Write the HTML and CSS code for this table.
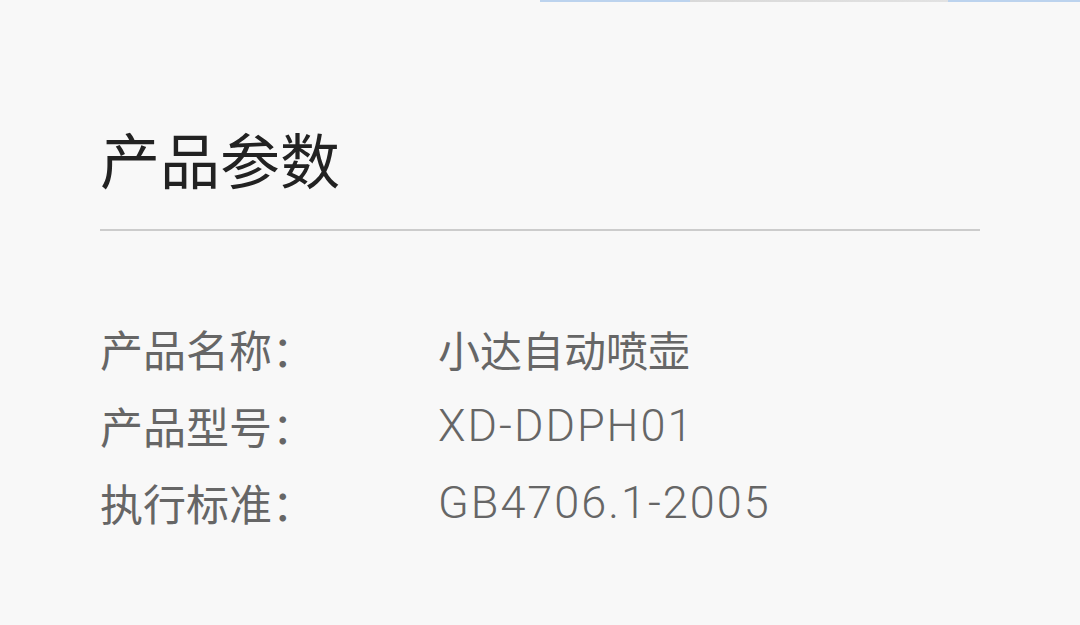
FILE: index.html
```html
<!DOCTYPE html>
<html lang="zh-CN">
<head>
    <meta charset="UTF-8">
    <meta name="viewport" content="width=device-width, initial-scale=1.0">
    <title>产品参数</title>
    <link rel="stylesheet" href="styles.css">
</head>
<body>
    <div class="top-strip"></div>
    <div class="container">
        <h2 class="title">产品参数</h2>
        <div class="divider"></div>
        <div class="params">
            <div class="row">
                <span class="label">产品名称：</span>
                <span class="value value-cn">小达自动喷壶</span>
            </div>
            <div class="row">
                <span class="label">产品型号：</span>
                <span class="value">XD-DDPH01</span>
            </div>
            <div class="row">
                <span class="label">执行标准：</span>
                <span class="value">GB4706.1-2005</span>
            </div>
        </div>
    </div>
</body>
</html>
```

FILE: styles.css
```css
body {
    font-family: Roboto, "Noto Sans CJK SC", sans-serif;
    margin: 0;
    padding: 0;
    width: 1080px;
    height: 625px;
    overflow: hidden;
    background-color: #f8f8f8;
}

/* bottom edge of the picture above */
.top-strip {
    height: 2px;
    margin-left: 540px;
    background: linear-gradient(to right, #bcd3ee 0, #bcd3ee 150px, #d9d9d9 150px, #e2e2e2 408px, #bcd3ee 408px);
}

.container {
    padding: 0 100px;
}

.title {
    margin: 0;
    padding-top: 114px;
    font-family: "Noto Sans CJK SC", sans-serif;
    font-size: 60px;
    font-weight: normal;
    line-height: 84px;
    color: #222;
}

.divider {
    margin-top: 29px;
    height: 2px;
    background-color: #cccccc;
}

.params {
    padding-top: 79px;
}

.row {
    display: flex;
    align-items: center;
    height: 77px;
    color: #666;
}

.label {
    width: 338px;
    font-family: "Noto Sans CJK SC", sans-serif;
    font-size: 43px;
    line-height: 77px;
}

.value {
    flex: 1;
    font-size: 45px;
    font-weight: 300;
    line-height: 77px;
    letter-spacing: 2px;
}

.value-cn {
    font-family: "Noto Sans CJK SC", sans-serif;
    font-size: 42px;
    font-weight: normal;
    letter-spacing: 0;
}
```
